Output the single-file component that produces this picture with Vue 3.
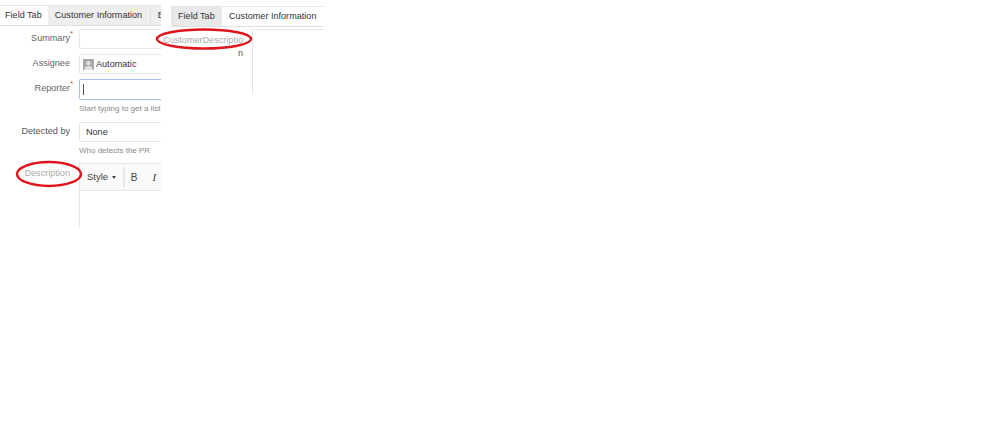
<template>
  <div class="page">
    <section class="panel left">
      <div class="tabs">
        <div class="tab active first">Field Tab</div>
        <div class="tab second">Customer Information</div>
        <div class="tab clip">E</div>
      </div>
      <div class="form">
        <div class="row r-summary">
          <label>Summary<sup>*</sup></label>
          <div class="input"></div>
        </div>
        <div class="row r-assignee">
          <label>Assignee</label>
          <div class="input value">
            <svg class="avatar" width="11" height="11" viewBox="0 0 12 12">
              <rect width="12" height="12" fill="#a9a9a9" />
              <circle cx="6" cy="4.5" r="2.3" fill="#e4e4e4" />
              <path d="M1.5 12c0-3 2-4.5 4.5-4.5s4.500 1.500 4.500 4.500z" fill="#e4e4e4" />
            </svg>
            <span>Automatic</span>
          </div>
        </div>
        <div class="row r-reporter">
          <label>Reporter<sup>*</sup></label>
          <div class="input focus"><i class="caret"></i></div>
        </div>
        <div class="hint h-reporter">Start typing to get a list</div>
        <div class="row r-detected">
          <label class="dark">Detected by</label>
          <div class="input value none">None</div>
        </div>
        <div class="hint h-detected">Who detects the PR</div>
        <div class="row r-desc">
          <label class="muted">Description</label>
          <div class="editor">
            <div class="toolbar">
              <div class="tool style">Style <i class="down"></i></div>
              <div class="tool b">B</div>
              <div class="tool it">I</div>
            </div>
          </div>
        </div>
      </div>
    </section>

    <section class="panel right">
      <div class="tabs">
        <div class="tab first-gray">Field Tab</div>
        <div class="tab active">Customer Information</div>
      </div>
      <div class="custom">
        <div class="custom-label"><span class="c1">CustomerDescriptio</span><span class="c2">n</span></div>
        <div class="custom-box"></div>
      </div>
    </section>

    <svg class="ring ring-a" width="68" height="28" viewBox="0 0 68 28">
      <ellipse cx="34" cy="14" rx="32" ry="12" fill="none" stroke="#e0141c" stroke-width="2.400" />
    </svg>
    <svg class="ring ring-b" width="98" height="24" viewBox="0 0 98 24">
      <ellipse cx="49" cy="12" rx="47" ry="9.500" fill="none" stroke="#e0141c" stroke-width="2.400" />
    </svg>
  </div>
</template>

<script setup>
</script>

<style>
html, body { margin: 0; background: #fff; }
</style>

<style scoped>
.page {
  position: relative;
  width: 999px;
  height: 434px;
  display: flex;
  gap: 10px;
  overflow: hidden;
  background: #fff;
  color: #333;
  font-family: "Liberation Sans", Arial, sans-serif;
  font-size: 9.100px;
}
.panel { flex: none; }
.left { width: 161px; overflow: hidden; padding-top: 5px; }
.right { width: 152px; padding-top: 6px; }
.tabs {
  display: flex;
  height: 19px;
  border-top: 1px solid #e4e4e4;
  border-bottom: 1px solid #e0e0e0;
}
.tab {
  flex: none;
  padding: 0 7px;
  line-height: 19px;
  background: #eeeeee;
  white-space: nowrap;
  color: #333;
}
.tab.active { background: #fff; }
.tab.first { padding: 0 6px 0 5px; }
.tab.second { width: 88px; }
.tab.clip { padding-left: 7px; border-left: 1px solid #e0e0e0; }
.first-gray { background: #e9e9e9; width: 37px; }
.form { display: flex; flex-direction: column; }
.row { display: flex; align-items: flex-start; }
label {
  flex: none;
  position: relative;
  width: 70px;
  margin-right: 9px;
  text-align: right;
  line-height: 19px;
  color: #666;
  white-space: nowrap;
}
label sup { position: absolute; left: 70px; top: -2px; color: #d04437; font-size: 8px; line-height: 14px; }
label.dark { color: #555; }
label.muted { color: #aaa; }
.input {
  flex: none;
  width: 100px;
  height: 18px;
  border: 1px solid #e6e6e6;
  border-radius: 2px;
  display: flex;
  align-items: center;
  box-sizing: content-box;
  color: #333;
}
.input.value { padding-left: 3px; gap: 2px; }
.input.none { padding-left: 6px; }
.input.focus { border-color: #a4c2ee; height: 19px; box-shadow: 0 0 1px #b9cff0; }
.caret { width: 1px; height: 11px; background: #555; margin-left: 3px; }
.avatar { flex: none; }
.r-summary { margin-top: 3px; }
.r-assignee { margin-top: 5px; }
.r-reporter { margin-top: 5px; }
.hint { margin: 3px 0 0 79px; line-height: 11px; font-size: 8px; color: #888; white-space: nowrap; }
.r-detected { margin-top: 8px; }
.h-detected { margin-top: 3px; }
.r-desc { margin-top: 7px; }
.r-desc label { line-height: 20px; }
.editor {
  flex: none;
  width: 100px;
  height: 64px;
  border-left: 1px solid #e6e6e6;
  border-top: 1px solid #e6e6e6;
}
.toolbar {
  display: flex;
  align-items: center;
  height: 26px;
  background: #fafafa;
  border-bottom: 1px solid #e6e6e6;
  color: #444;
}
.tool { white-space: nowrap; }
.style { padding: 0 7px; border-right: 2px solid #e6e6e6; height: 20px; line-height: 20px; font-size: 9.500px; }
.down {
  display: inline-block;
  width: 0;
  height: 0;
  border-left: 2.500px solid transparent;
  border-right: 2.500px solid transparent;
  border-top: 3px solid #444;
  vertical-align: 1px;
  margin-left: 1px;
}
.b { margin-left: 6px; font-size: 10px; }
.it { margin-left: 15px; font-style: italic; font-family: "Liberation Serif", serif; font-size: 11px; }
.custom { display: flex; margin-top: 2px; }
.custom-label {
  flex: none;
  width: 72px;
  margin-right: 9px;
  display: flex;
  flex-direction: column;
  align-items: flex-end;
  padding-top: 5px;
  line-height: 13px;
  color: #aaa;
  white-space: nowrap;
}
.c2 { color: #555; }
.custom-box {
  flex: none;
  width: 70px;
  height: 64px;
  border-left: 1px solid #e6e6e6;
  border-top: 1px solid #e6e6e6;
}
.ring { position: absolute; }
.ring-a { left: 15px; top: 160px; }
.ring-b { left: 155px; top: 27px; }
</style>
